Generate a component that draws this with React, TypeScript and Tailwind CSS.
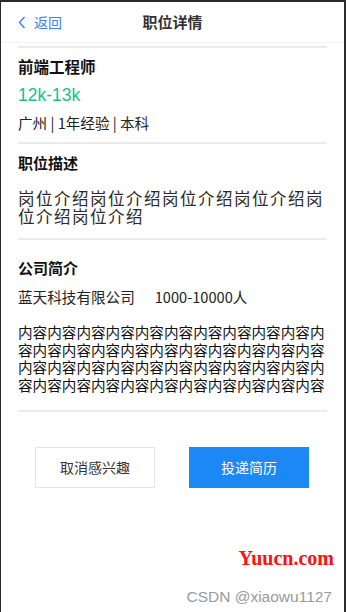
import React from "react";

const cjk = '"Noto Sans CJK SC", "Liberation Sans", sans-serif';

function Divider({ className = "" }: { className?: string }) {
  return <div className={`h-[2px] bg-[#ebebeb] ${className}`} />;
}

export default function App() {
  const intro = "岗位介绍".repeat(6);
  const content = "内容".repeat(42);

  return (
    <div className="w-[346px] h-[612px] flex bg-[#2b2b2b] pt-[2px] pl-[1px] pr-[2px]">
      <div className="relative flex-1 bg-white flex flex-col" style={{ fontFamily: cjk }}>
        {/* header */}
        <div className="relative h-[41px] flex items-center justify-center border-b border-[#f3f3f3]">
          <div className="absolute left-[17px] top-0 h-full flex items-center gap-[8px] text-[#3d7ff5]">
            <svg width="8" height="13" viewBox="0 0 8 13" fill="none">
              <polyline points="6.5,1 1.5,6.5 6.5,12" stroke="#3d7ff5" strokeWidth="1.4" />
            </svg>
            <span className="text-[14px] leading-none">返回</span>
          </div>
          <h1 className="text-[15px] font-bold text-[#333]">职位详情</h1>
        </div>

        <div className="px-[17px] flex flex-col">
          <Divider className="mt-[3px]" />

          <div className="mt-[8px] text-[15.5px] font-bold leading-[20px] text-[#111]">前端工程师</div>
          <div
            className="mt-[7px] text-[17.5px] leading-[24px] text-[#1dbf8a]"
            style={{ fontFamily: '"Liberation Sans", "Noto Sans CJK SC", sans-serif' }}
          >
            12k-13k
          </div>
          <div className="mt-[6px] text-[14.6px] leading-[20px] text-[#222]">广州 | 1年经验 | 本科</div>

          <Divider className="mt-[9px]" />

          <div className="mt-[9px] text-[15px] font-bold leading-[20px] text-[#111]">职位描述</div>
          <p className="mt-[16px] text-[16.5px] tracking-[1.5px] leading-[18px] text-[#2a2a2a] break-all">{intro}</p>

          <Divider className="mt-[13px]" />

          <div className="mt-[18px] text-[15px] font-bold leading-[20px] text-[#111]">公司简介</div>
          <div className="mt-[9px] flex gap-[20px] text-[14.6px] leading-[20px] text-[#222]">
            <span>蓝天科技有限公司</span>
            <span>1000-10000人</span>
          </div>
          <p className="mt-[16px] text-[14.6px] leading-[17.5px] text-[#111] break-all">{content}</p>

          <Divider className="mt-[17px]" />

          <div className="mt-[35px] flex justify-between pl-[17px] pr-[18px]">
            <button className="w-[120px] h-[41px] border border-[#e6e6e6] bg-white text-[14px] text-[#333]">
              取消感兴趣
            </button>
            <button className="w-[120px] h-[41px] bg-[#1b88f6] text-[14px] text-white">投递简历</button>
          </div>
        </div>

        {/* watermarks */}
        <div
          className="absolute right-[10px] top-[544px] text-[20px] font-bold leading-[24px] text-[#ff1010]"
          style={{ fontFamily: '"Liberation Serif", serif' }}
        >
          Yuucn.com
        </div>
        <div
          className="absolute right-[12px] top-[585px] text-[15.5px] leading-[20px] text-[#9a9a9a]"
          style={{ fontFamily: '"Liberation Sans", sans-serif' }}
        >
          CSDN @xiaowu1127
        </div>
      </div>
    </div>
  );
}
